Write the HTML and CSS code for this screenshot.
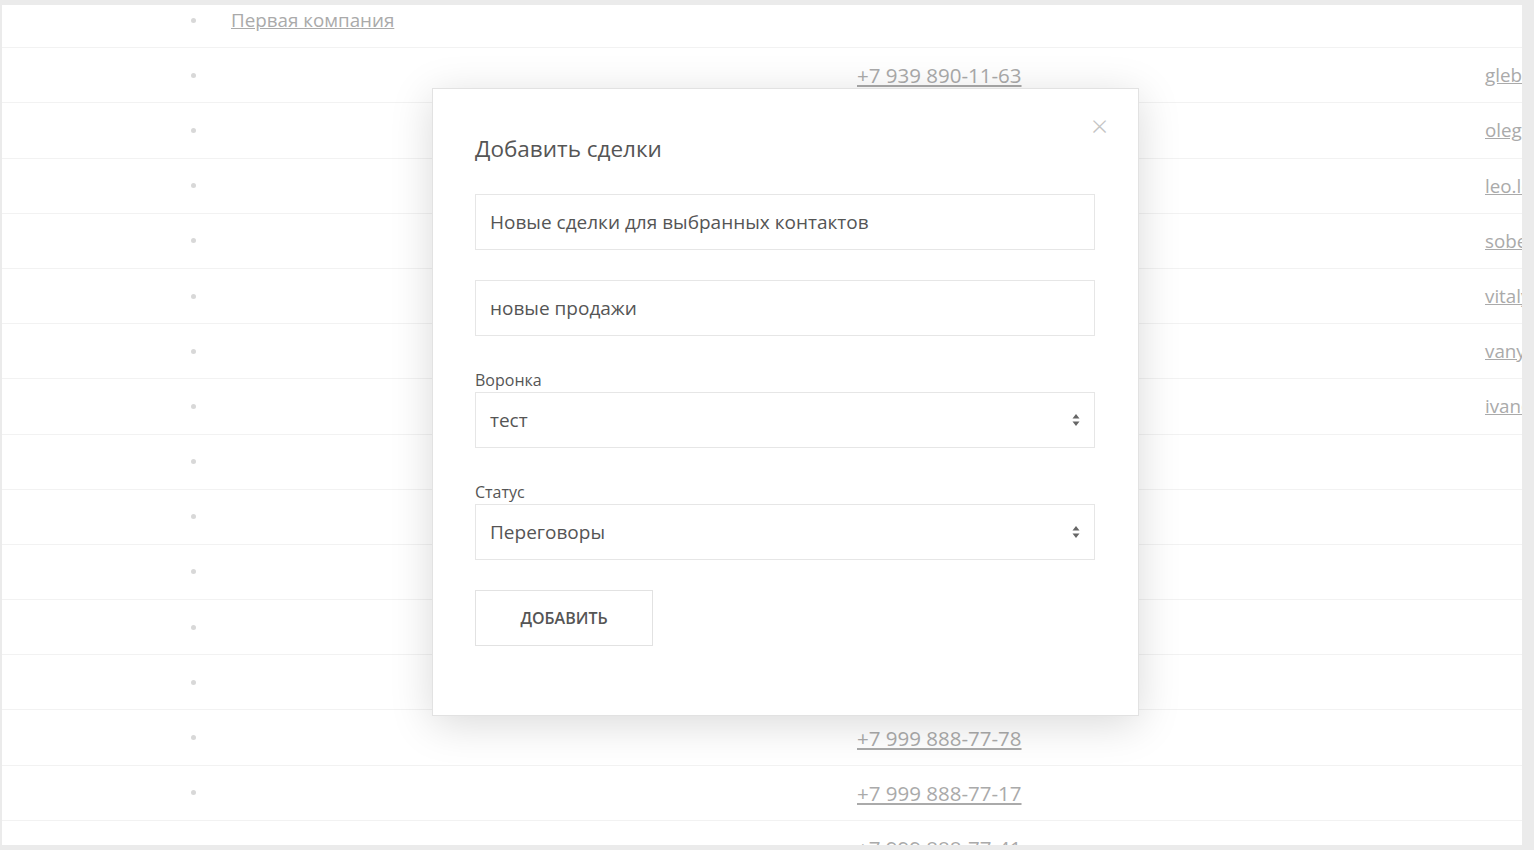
FILE: index.html
```html
<!DOCTYPE html>
<html lang="ru">
<head>
    <meta charset="UTF-8">
    <meta name="viewport" content="width=device-width, initial-scale=1.0">
    <title>Контакты</title>
    <link rel="stylesheet" href="styles.css">
</head>
<body>
    <div class="frame">
        <!-- Contacts list -->
        <div class="contacts">
            <div class="row"><div class="bullet"></div><div class="name"><a href="#">Первая компания</a></div><div class="phone"></div><div class="email"></div></div>
            <div class="row"><div class="bullet"></div><div class="name"></div><div class="phone"><a href="#">+7 939 890-11-63</a></div><div class="email"><a href="#">gleb@mail.ru</a></div></div>
            <div class="row"><div class="bullet"></div><div class="name"></div><div class="phone"></div><div class="email"><a href="#">oleg@mail.ru</a></div></div>
            <div class="row"><div class="bullet"></div><div class="name"></div><div class="phone"></div><div class="email"><a href="#">leo.l@mail.ru</a></div></div>
            <div class="row"><div class="bullet"></div><div class="name"></div><div class="phone"></div><div class="email"><a href="#">sobes@mail.ru</a></div></div>
            <div class="row"><div class="bullet"></div><div class="name"></div><div class="phone"></div><div class="email"><a href="#">vitaly@mail.ru</a></div></div>
            <div class="row"><div class="bullet"></div><div class="name"></div><div class="phone"></div><div class="email"><a href="#">vanya@mail.ru</a></div></div>
            <div class="row"><div class="bullet"></div><div class="name"></div><div class="phone"></div><div class="email"><a href="#">ivan@mail.ru</a></div></div>
            <div class="row"><div class="bullet"></div><div class="name"></div><div class="phone"></div><div class="email"></div></div>
            <div class="row"><div class="bullet"></div><div class="name"></div><div class="phone"></div><div class="email"></div></div>
            <div class="row"><div class="bullet"></div><div class="name"></div><div class="phone"></div><div class="email"></div></div>
            <div class="row"><div class="bullet"></div><div class="name"></div><div class="phone"></div><div class="email"></div></div>
            <div class="row"><div class="bullet"></div><div class="name"></div><div class="phone"></div><div class="email"></div></div>
            <div class="row"><div class="bullet"></div><div class="name"></div><div class="phone"><a href="#">+7 999 888-77-78</a></div><div class="email"></div></div>
            <div class="row"><div class="bullet"></div><div class="name"></div><div class="phone"><a href="#">+7 999 888-77-17</a></div><div class="email"></div></div>
            <div class="row"><div class="bullet"></div><div class="name"></div><div class="phone"><a href="#">+7 999 888-77-41</a></div><div class="email"></div></div>
        </div>

        <!-- Add deals dialog -->
        <div class="modal">
            <span class="close">&times;</span>
            <h2 class="modal-title">Добавить сделки</h2>
            <form class="modal-form">
                <input class="field" type="text" value="Новые сделки для выбранных контактов">
                <input class="field" type="text" value="новые продажи">
                <div class="group">
                    <label>Воронка</label>
                    <div class="select">
                        <span>тест</span>
                        <svg class="arrows" width="8" height="14" viewBox="0 0 8 14"><path d="M4 1 L7.5 5.5 H0.5 Z M4 13 L7.5 8.5 H0.5 Z" fill="#666"/></svg>
                    </div>
                </div>
                <div class="group">
                    <label>Статус</label>
                    <div class="select">
                        <span>Переговоры</span>
                        <svg class="arrows" width="8" height="14" viewBox="0 0 8 14"><path d="M4 1 L7.5 5.5 H0.5 Z M4 13 L7.5 8.5 H0.5 Z" fill="#666"/></svg>
                    </div>
                </div>
                <button class="btn" type="button">Добавить</button>
            </form>
        </div>
    </div>
</body>
</html>
```

FILE: styles.css
```css
body {
    margin: 0;
    background-color: #ebebeb;
    font-family: "Open Sans", Arial, sans-serif;
    color: #555;
}
.frame {
    position: relative;
    margin: 5px 12px 0 2px;
    height: 840px;
    background-color: #fff;
    overflow: hidden;
}
.contacts {
    margin-top: -12px;
}
.row {
    display: flex;
    align-items: center;
    height: 55.2px;
    box-sizing: border-box;
    border-bottom: 1px solid #f2f2f2;
    font-size: 18.8px;
    white-space: nowrap;
}
.row a {
    color: #aaa;
    text-decoration: underline;
}
.bullet {
    width: 229px;
    flex-shrink: 0;
}
.bullet::before {
    content: "";
    display: block;
    width: 5px;
    height: 5px;
    margin-left: 189px;
    border-radius: 50%;
    background-color: #d8d8d8;
}
.name {
    width: 626px;
    flex-shrink: 0;
}
.phone {
    width: 628px;
    flex-shrink: 0;
    font-size: 20.5px;
}

/* Dialog */
.modal {
    position: absolute;
    top: 83px;
    left: 430px;
    width: 707px;
    height: 628px;
    box-sizing: border-box;
    padding: 44px 42px;
    background-color: #fff;
    border: 1px solid #e2e2e2;
    box-shadow: 0 8px 40px rgba(0, 0, 0, 0.15);
}
.close {
    position: absolute;
    top: 16px;
    right: 30px;
    font-size: 30px;
    font-weight: 300;
    color: #c4c4c4;
    cursor: pointer;
}
.modal-title {
    margin: 0 0 30px;
    font-size: 22.5px;
    font-weight: 400;
    color: #555;
}
.modal-form {
    display: flex;
    flex-direction: column;
    gap: 30px;
}
.field,
.select {
    width: 620px;
    height: 56px;
    box-sizing: border-box;
    padding: 0 14px;
    border: 1px solid #e6e6e6;
    font-family: inherit;
    font-size: 19px;
    color: #555;
    outline: none;
}
.group {
    display: flex;
    flex-direction: column;
    margin-top: 3px;
}
.group label {
    font-size: 16px;
    color: #555;
    margin-bottom: 1px;
}
.select {
    display: flex;
    align-items: center;
    justify-content: space-between;
    padding-right: 14px;
}
.btn {
    width: 178px;
    height: 56px;
    border: 1px solid #e2e2e2;
    background-color: #fff;
    font-family: inherit;
    font-size: 16px;
    font-weight: 600;
    text-transform: uppercase;
    color: #555;
    cursor: pointer;
}
```
